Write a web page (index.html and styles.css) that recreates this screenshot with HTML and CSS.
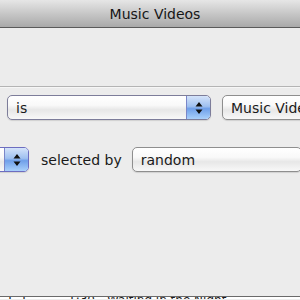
FILE: index.html
```html
<!DOCTYPE html>
<html>
<head>
<meta charset="utf-8">
<link rel="stylesheet" href="styles.css">
</head>
<body>
<div class="window">
  <div class="titlebar">Music Videos</div>
  <div class="content">
    <div class="sep"></div>
    <div class="row row1">
      <div class="popup p-is">
        <span class="label">is</span>
        <span class="stepper"><svg width="8" height="14" viewBox="0 0 8 14"><path d="M4 1 L7.5 5.5 H0.5 Z M4 13 L7.5 8.5 H0.5 Z" fill="#111"/></svg></span>
      </div>
      <div class="popup p-music"><span class="label">Music Videos</span></div>
    </div>
    <div class="row row2">
      <div class="popup p-left">
        <span class="stepper"><svg width="8" height="14" viewBox="0 0 8 14"><path d="M4 1 L7.5 5.5 H0.5 Z M4 13 L7.5 8.5 H0.5 Z" fill="#111"/></svg></span>
      </div>
      <span class="text">selected by</span>
      <div class="popup p-random"><span class="label">random</span></div>
    </div>
    <div class="bottom">
      <span class="b1">1</span><span class="b2">1</span><span class="b3">1:30</span><span class="b4">Waiting in the Night</span>
    </div>
  </div>
</div>
</body>
</html>
```
FILE: styles.css
```css
html, body {
  margin: 0;
  padding: 0;
  width: 300px;
  height: 300px;
  overflow: hidden;
  background: #ececec;
  font-family: "Lucida Grande", "DejaVu Sans", sans-serif;
  font-size: 14px;
  color: #1a1a1a;
}
.window {
  width: 300px;
  height: 300px;
  overflow: hidden;
}
.titlebar {
  height: 27px;
  border-bottom: 1px solid #5a5a5a;
  background: linear-gradient(#e6e6e6, #c4c4c4 55%, #a9a9a9);
  text-align: center;
  line-height: 29px;
  font-size: 14px;
  color: #161616;
  padding-left: 10px;
}
.content {
  background: #ececec;
}
.sep {
  margin-top: 58px;
  height: 1px;
  background: #b4b4b4;
  border-bottom: 1px solid #f6f6f6;
}
.row {
  display: flex;
  align-items: center;
  white-space: nowrap;
}
.row1 {
  margin-top: 7px;
  padding-left: 7px;
}
.row2 {
  margin-top: 27px;
}
.popup {
  height: 25px;
  box-sizing: border-box;
  border: 1px solid #8e8e8e;
  border-radius: 5px;
  background: linear-gradient(#ffffff, #f9f9f9 40%, #e7e7e7 60%, #f8f8f8);
  box-shadow: 0 1px 1px rgba(0,0,0,0.12);
  display: flex;
  align-items: center;
  overflow: hidden;
  flex: none;
}
.label {
  padding-left: 8px;
  color: #1a1a1a;
  flex: 1;
}
.stepper {
  width: 23px;
  height: 100%;
  flex: none;
  display: flex;
  align-items: center;
  justify-content: center;
  background: linear-gradient(#d4e3fa, #9fc0f0 45%, #6f9fe9 55%, #a9d0fb);
  border-left: 1px solid #7a86c8;
}
.p-is {
  width: 204px;
  border-color: #7d7d9a;
}
.p-is .stepper {
  border-radius: 0 4px 4px 0;
}
.p-music {
  margin-left: 11px;
  width: 120px;
}
.p-left {
  margin-left: -170px;
  width: 199px;
  justify-content: flex-end;
  border-color: #6d6dc0;
}
.text {
  margin-left: 12px;
  color: #1a1a1a;
}
.p-random {
  margin-left: 10px;
  width: 170px;
}
.bottom {
  margin-top: 124px;
  height: 2px;
  border-top: 1px solid #6a6a6a;
  background: #fff;
  overflow: hidden;
  position: relative;
  font-size: 12px;
  line-height: 12px;
  white-space: nowrap;
}
.bottom span {
  position: absolute;
  top: -3px;
}
.b1 { left: 6px; }
.b2 { left: 20px; }
.b3 { left: 68px; }
.b4 { left: 107px; }
```
